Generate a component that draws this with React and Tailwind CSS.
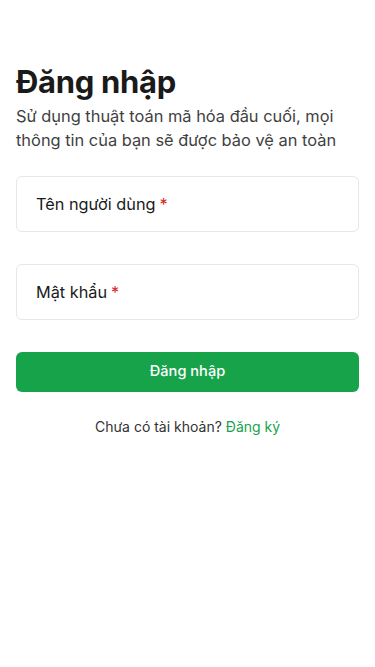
import React from "react";

export default function App() {
  return (
    <div className="min-h-[667px] bg-white px-4 pt-[62px] text-[#1a1a1a]" style={{ fontFamily: "Inter, 'Noto Sans', sans-serif" }}>
      <h1 className="text-[31px] font-bold leading-[40px] tracking-[-0.3px]">Đăng nhập</h1>
      <p className="mt-[2px] text-[16.4px] leading-6 text-[#3f3f3f]">
        Sử dụng thuật toán mã hóa đầu cuối, mọi thông tin của bạn sẽ được bảo vệ an toàn
      </p>
      <div className="mt-6 flex h-[56px] items-center rounded-md border border-[#e5e7eb] pl-[19px] pr-5 text-[16.3px]">
        Tên người dùng <span className="ml-1 text-[#dc2626]">*</span>
      </div>
      <div className="mt-8 flex h-[56px] items-center rounded-md border border-[#e5e7eb] pl-[19px] pr-5 text-[16.3px]">
        Mật khẩu <span className="ml-1 text-[#dc2626]">*</span>
      </div>
      <button className="mt-8 flex h-[40px] w-full items-center justify-center rounded-md bg-[#16a34a] text-[14.6px] font-medium text-white">
        Đăng nhập
      </button>
      <p className="mt-6 text-center text-[14px] text-[#333]">
        Chưa có tài khoản? <span className="text-[#16a34a]">Đăng ký</span>
      </p>
    </div>
  );
}
